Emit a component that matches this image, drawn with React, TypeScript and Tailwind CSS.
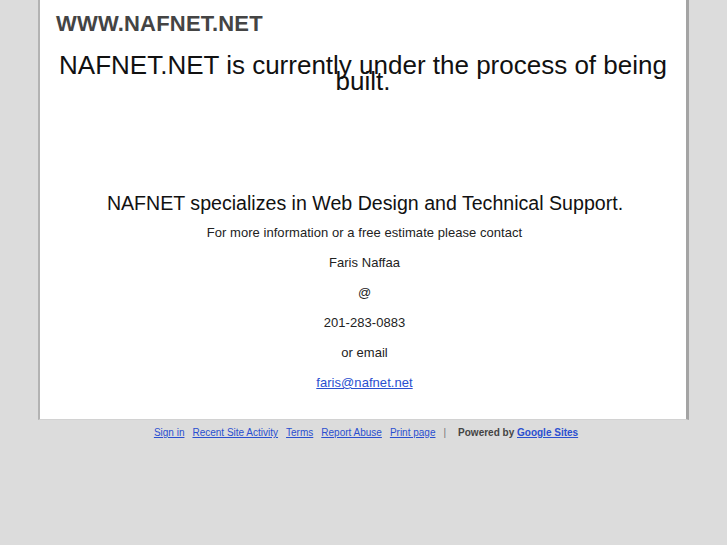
import React from 'react';

const lines = ['Faris Naffaa', '@', '201-283-0883', 'or email'];

const FooterLink: React.FC<{ children: React.ReactNode }> = ({ children }) => (
    <a href="#" className="text-[#2a4fd0] underline mr-[8px]">{children}</a>
);

export default function App() {
    return (
        <div className="min-h-[545px] bg-[#dcdcdc] font-['Liberation_Sans',Arial,sans-serif]">
            <div className="mx-auto w-[651px] bg-white border-l-2 border-l-[#b3b3b3] border-r-[3px] border-r-[#a4a4a4] border-b border-b-[#d2d2d2] h-[420px]">
                <div className="pl-[16px] pt-[11px] text-[22px] leading-[26px] font-bold text-[#444] tracking-[0.2px]">WWW.NAFNET.NET</div>
                <div className="mt-[20px] text-center text-[26px] leading-[16px] text-[#111] px-[14px]">
                    NAFNET.NET is currently under the process of being built.
                </div>
                <div className="mt-[102px] text-center text-[19.6px] leading-[24px] text-[#111] pl-[4px]">
                    NAFNET specializes in Web Design and Technical Support.
                </div>
                <div className="mt-[10px] text-center text-[13px] leading-[16px] text-[#222] tracking-[0.05px] flex flex-col gap-[14px] pl-[3px]">
                    <div>For more information or a free estimate please contact</div>
                    {lines.map((l) => (
                        <div key={l}>{l}</div>
                    ))}
                    <div>
                        <a href="#" className="text-[#2a4fd0] underline">faris@nafnet.net</a>
                    </div>
                </div>
            </div>
            <div className="pt-[6px] pl-[5px] text-center text-[10px] leading-[14px]">
                <FooterLink>Sign in</FooterLink>
                <FooterLink>Recent Site Activity</FooterLink>
                <FooterLink>Terms</FooterLink>
                <FooterLink>Report Abuse</FooterLink>
                <FooterLink>Print page</FooterLink>
                <span className="text-[#777] mr-[12px]">|</span>
                <span className="font-bold text-[#444]">Powered by </span>
                <a href="#" className="font-bold text-[#2a4fd0] underline">Google Sites</a>
            </div>
        </div>
    );
}
